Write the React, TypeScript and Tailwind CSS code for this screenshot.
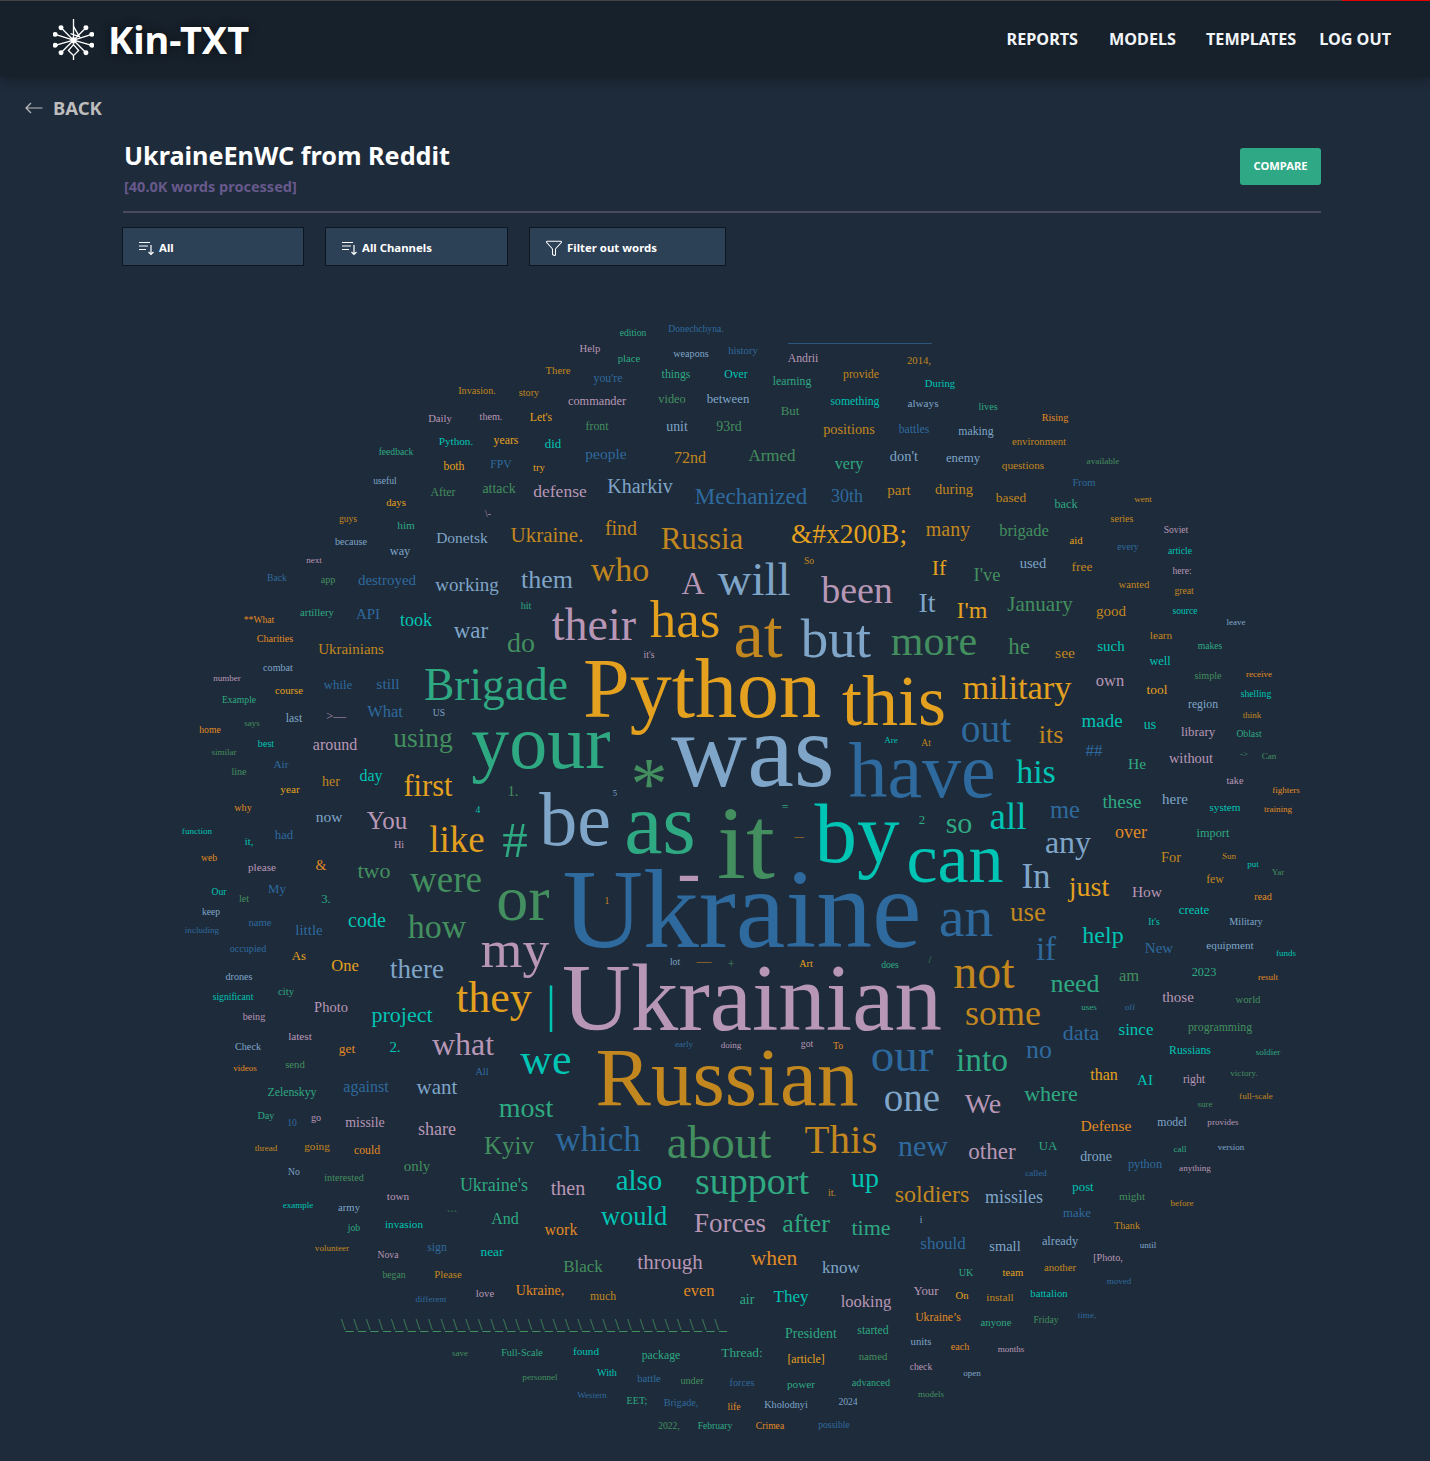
import { Filter } from 'lucide-react';

// word cloud palette
const G = '#e4a11f'; // gold
const A = '#c2871f'; // amber
const O = '#e08a24'; // orange
const B = '#2e6a9e'; // blue
const S = '#7fa5c8'; // sky
const M = '#b897b6'; // mauve
const N = '#438f5f'; // green
const T = '#2ea982'; // teal
const C = '#00c4b4'; // cyan

// [text, center x, center y, font size, colour]
type Word = [string, number, number, number, string];

const words: Word[] = [
  ['edition', 633, 333, 9, T], ['Donechchyna.', 696, 329, 9, B], ['________________________', 860, 339, 11.2, B],
  ['Help', 590, 349, 10, M], ['place', 629, 359, 10, T], ['weapons', 691, 354, 9.5, S], ['history', 743, 351, 10, B],
  ['Andrii', 803, 359, 11, M], ['2014,', 919, 361, 10, A], ['There', 558, 371, 10, A], ["you're", 608, 379, 11, B],
  ['things', 676, 375, 11, T], ['Over', 736, 375, 11, C], ['learning', 792, 382, 11, T], ['provide', 861, 375, 11, A],
  ['During', 940, 384, 10, C], ['Invasion.', 477, 391, 9.5, A], ['story', 529, 393, 9.5, A], ['commander', 597, 402, 11.5, M],
  ['video', 672, 400, 11.5, N], ['between', 728, 399, 12, S], ['something', 855, 402, 11, C], ['always', 923, 404, 10.5, S],
  ['lives', 988, 407, 9.5, T], ['But', 790, 411, 12, N], ['Daily', 440, 419, 10, M], ['them.', 491, 417, 9.5, M],
  ["Let's", 541, 418, 11, G], ['Rising', 1055, 418, 9.5, O], ['front', 597, 427, 11, N], ['unit', 677, 427, 13, S],
  ['93rd', 729, 427, 13, N], ['positions', 849, 430, 14.3, A], ['battles', 914, 430, 11, B], ['making', 976, 432, 11, S],
  ['environment', 1039, 442, 10, A], ['Python.', 456, 442, 10.5, C], ['years', 506, 441, 11, G], ['did', 553, 444, 12, C],
  ['feedback', 396, 452, 9, T], ['people', 606, 454, 15.5, B], ['72nd', 690, 458, 16, A], ['Armed', 772, 456, 17, N],
  ['very', 849, 464, 16, T], ["don't", 904, 457, 13.5, S], ['enemy', 963, 458, 12, S], ['questions', 1023, 466, 10.5, A],
  ['available', 1103, 461, 8.5, N], ['both', 454, 467, 11, G], ['FPV', 501, 465, 11, B], ['try', 539, 468, 10, G],
  ['useful', 385, 481, 9, S], ['From', 1084, 483, 10, B], ['After', 443, 493, 11, N], ['attack', 499, 489, 13, N],
  ['defense', 560, 492, 17.5, M], ['Kharkiv', 640, 487, 20, S], ['Mechanized', 751, 497, 23, B], ['30th', 847, 497, 18, B],
  ['part', 899, 490, 15, A], ['during', 954, 490, 14.5, A], ['based', 1011, 498, 12.5, A], ['went', 1143, 499, 8.5, A],
  ['days', 396, 503, 10, G], ['back', 1066, 505, 11.5, T], ['guys', 348, 519, 9, A], ['\\-', 488, 514, 9, M],
  ['series', 1122, 519, 9.5, A], ['him', 406, 526, 10.5, T], ['Soviet', 1176, 530, 9, M], ['brigade', 1024, 531, 16.5, N],
  ['find', 621, 529, 20, A], ['Ukraine.', 547, 536, 21, A], ['&#x200B;', 849, 535, 27.5, G], ['many', 948, 530, 20, A],
  ['aid', 1076, 541, 10, G], ['because', 351, 542, 9.5, S], ['Donetsk', 462, 538, 15.5, S], ['Russia', 702, 540, 31, A],
  ['every', 1128, 547, 9, B], ['article', 1180, 551, 9, C], ['way', 400, 552, 11.5, S], ['next', 314, 560, 8.5, M],
  ['So', 809, 561, 9, A], ['used', 1033, 564, 14.5, S], ['free', 1082, 567, 12.5, A], ['who', 620, 571, 34, A],
  ["I've", 987, 575, 18.5, N], ['If', 939, 568, 22, G], ['here:', 1182, 571, 9, M], ['them', 547, 580, 26, S],
  ['working', 467, 585, 19, S], ['A', 693, 584, 32, M], ['will', 754, 581, 47, S], ['been', 857, 592, 38, M],
  ['destroyed', 387, 581, 14, B], ['app', 328, 580, 9.5, N], ['Back', 277, 578, 9, B], ['wanted', 1134, 585, 10, A],
  ['great', 1184, 591, 9, A], ['It', 927, 604, 28, S], ["I'm", 972, 611, 24, G], ['January', 1040, 605, 21, N],
  ['good', 1111, 612, 14, A], ['source', 1185, 611, 9, C], ['has', 685, 621, 53, G], ['their', 594, 626, 46, M],
  ['hit', 526, 606, 9.5, T], ['API', 368, 615, 14, B], ['artillery', 317, 613, 10, T], ['**What', 259, 620, 9, O],
  ['took', 416, 621, 18, C], ['war', 471, 631, 23, S], ['leave', 1236, 622, 8.5, S], ['Charities', 275, 639, 9.5, O],
  ['do', 521, 644, 28, N], ['at', 758, 637, 68, A], ['but', 836, 640, 55, S], ['more', 934, 642, 42, N],
  ['he', 1019, 647, 23, N], ['see', 1065, 653, 15.5, A], ['such', 1111, 646, 15, C], ['learn', 1161, 636, 10.5, A],
  ['makes', 1210, 646, 9, T], ['Ukrainians', 351, 650, 14, A], ["it's", 649, 655, 9, M], ['well', 1160, 662, 11.5, C],
  ['combat', 278, 668, 9.5, S], ['number', 227, 678, 8.5, M], ['simple', 1208, 676, 9.5, N], ['receive', 1259, 674, 8.5, O],
  ['own', 1110, 681, 16.5, M], ['tool', 1157, 690, 12.5, G], ['military', 1017, 689, 34.5, G], ['Brigade', 496, 686, 45.5, T],
  ['Python', 702, 692, 84, G], ['this', 894, 703, 72, G], ['while', 338, 685, 12, B], ['still', 388, 684, 15.5, B],
  ['course', 289, 691, 10, G], ['shelling', 1256, 694, 9, C], ['region', 1203, 705, 11, S], ['Example', 239, 700, 9, T],
  ['last', 294, 719, 11, S], ['>—', 336, 716, 12, M], ['What', 385, 712, 16.5, B], ['US', 439, 713, 9, S],
  ['says', 252, 723, 8.5, N], ['think', 1252, 715, 8.5, A], ['made', 1102, 721, 19, C], ['us', 1150, 725, 13, C],
  ['out', 986, 730, 39.5, B], ['its', 1051, 735, 26, A], ['library', 1198, 732, 12, M], ['home', 210, 730, 9, O],
  ['Oblast', 1249, 734, 9, T], ['Are', 891, 740, 8.5, C], ['At', 926, 743, 9, A], ['best', 266, 744, 9.5, C],
  ['around', 335, 745, 16, M], ['using', 423, 739, 27.5, N], ['your', 541, 745, 76, T], ['was', 753, 754, 105, S],
  ['have', 922, 774, 78, B], ['##', 1094, 751, 17, B], ['similar', 224, 752, 8.5, N], ['->', 1244, 754, 8.5, N],
  ['Can', 1269, 756, 8.5, N], ['without', 1191, 759, 13.5, M], ['He', 1137, 764, 15.5, T], ['line', 239, 772, 9.5, N],
  ['Air', 281, 765, 10.5, B], ['day', 371, 776, 16, C], ['her', 331, 782, 13, A], ['first', 428, 787, 30.5, G],
  ['*', 649, 787, 74, N], ['his', 1036, 773, 34, C], ['take', 1235, 781, 9.5, M], ['year', 290, 790, 10.5, G],
  ['1.', 513, 792, 14, N], ['fighters', 1286, 790, 8.5, O], ['5', 615, 794, 8, S], ['these', 1122, 802, 19, T],
  ['here', 1175, 800, 14, S], ['why', 243, 808, 9.5, O], ['system', 1225, 808, 10.5, C], ['training', 1278, 809, 8.5, O],
  ['4', 478, 810, 9, C], ['be', 575, 822, 76, S], ['as', 660, 827, 86, T], ['it', 746, 847, 104, N],
  ['by', 857, 836, 85, C], ['=', 785, 808, 11, T], ['me', 1065, 811, 24.5, B], ['2', 922, 820, 12, T],
  ['so', 959, 824, 30, T], ['all', 1008, 818, 37, C], ['now', 329, 817, 15.5, S], ['You', 387, 821, 25, M],
  ['like', 457, 841, 37, G], ['#', 515, 842, 51, T], ['—', 799, 837, 9, A],
  ['import', 1213, 834, 11.5, T], ['over', 1131, 833, 18, O], ['any', 1068, 843, 32, S], ['function', 197, 831, 8.5, C],
  ['had', 284, 835, 12, B], ['it,', 249, 842, 10, C], ['Hi', 399, 845, 9.5, M], ['can', 955, 861, 70, C],
  ['For', 1171, 858, 13.5, A], ['Sun', 1229, 856, 8.5, A], ['web', 209, 858, 9, O], ['put', 1253, 864, 8.5, C],
  ['please', 262, 868, 10.5, M], ['&', 321, 866, 13, O], ['two', 374, 871, 22, N], ['Yar', 1278, 872, 8.5, N],
  ['In', 1036, 877, 35, S], ['few', 1215, 880, 11, A], ['were', 446, 881, 37, N], ['just', 1089, 888, 28, G],
  ['How', 1147, 892, 15.5, M], ['Our', 219, 892, 9, C], ['My', 277, 889, 12, B], ['let', 244, 899, 9.5, N],
  ['3.', 326, 899, 12, T], ['read', 1263, 897, 9.5, O], ['or', 523, 901, 64, N], ['Ukraine', 742, 914, 111.5, B],
  ['-', 689, 874, 70, M], ['create', 1194, 910, 12, C], ['keep', 211, 912, 9, S], ['use', 1028, 913, 27, A],
  ['Military', 1246, 922, 9.5, S], ['an', 966, 919, 58, B], ['code', 367, 921, 20, C], ["It's", 1154, 922, 9, C],
  ['name', 260, 923, 10, B], ['how', 437, 928, 34, N], ['little', 309, 931, 14, B], ['including', 202, 930, 8.5, B],
  ['help', 1103, 936, 24, C], ['occupied', 248, 949, 9.5, B], ['New', 1159, 948, 15, B], ['equipment', 1230, 946, 10.5, S],
  ['if', 1046, 950, 33, B], ['my', 515, 951, 53.5, M], ['As', 299, 956, 12, G], ['funds', 1286, 953, 8.5, C],
  ['1', 607, 901, 9, A], ['lot', 675, 962, 9, S], ['—', 704, 962, 14, A], ['+', 731, 965, 11, N],
  ['Art', 806, 964, 9.5, G], ['does', 890, 965, 9, T], ['/', 930, 960, 10, N], ['not', 984, 974, 48, A],
  ['One', 345, 966, 16.5, G], ['there', 417, 970, 27, S], ['am', 1129, 976, 16.5, N], ['2023', 1204, 973, 11.5, T],
  ['result', 1268, 977, 8.5, O], ['drones', 239, 977, 9.5, S], ['need', 1075, 984, 26, T], ['city', 286, 992, 10, T],
  ['they', 494, 999, 44, G], ['|', 551, 1006, 50, C], ['those', 1178, 998, 14, M], ['world', 1248, 1000, 10, N],
  ['significant', 233, 997, 9, C], ['Ukrainian', 752, 1001, 95, M], ['uses', 1089, 1007, 8.5, T], ['off', 1130, 1007, 8.5, B],
  ['some', 1003, 1014, 36, A], ['Photo', 331, 1008, 14.5, M], ['being', 254, 1017, 9.5, M], ['project', 402, 1015, 22, C],
  ['data', 1081, 1033, 22, B], ['since', 1136, 1030, 17, C], ['programming', 1220, 1028, 11, N], ['latest', 300, 1037, 10.5, M],
  ['Check', 248, 1047, 9.5, S], ['get', 347, 1049, 12.5, O], ['2.', 395, 1048, 14, C], ['what', 463, 1045, 32, M],
  ['no', 1039, 1050, 26, B], ['early', 684, 1044, 8.5, B], ['doing', 731, 1045, 8.5, M], ['got', 807, 1044, 9, M],
  ['To', 838, 1046, 9, O], ['Russians', 1190, 1051, 11, C], ['soldier', 1268, 1052, 8.5, T], ['our', 902, 1057, 47, B],
  ['into', 982, 1061, 33.5, T], ['we', 546, 1061, 44, C], ['All', 482, 1072, 10, B], ['videos', 245, 1068, 8.5, O],
  ['send', 295, 1065, 10, N], ['against', 366, 1087, 16, B], ['want', 437, 1088, 21, S], ['Russian', 727, 1080, 83, A],
  ['than', 1104, 1075, 16, G], ['AI', 1145, 1081, 14, C], ['right', 1194, 1080, 11, M], ['victory.', 1244, 1073, 8.5, N],
  ['one', 912, 1099, 39, S], ['We', 983, 1105, 28, M], ['where', 1051, 1094, 22, T], ['full-scale', 1256, 1096, 8.5, A],
  ['Zelenskyy', 292, 1093, 11, T], ['sure', 1205, 1104, 8.5, N], ['most', 526, 1109, 28, T], ['Day', 266, 1116, 9.5, T],
  ['go', 316, 1118, 9.5, M], ['10', 292, 1123, 9, B], ['missile', 365, 1123, 13, M], ['share', 437, 1130, 18, M],
  ['Defense', 1106, 1126, 15.5, O], ['model', 1172, 1123, 11, S], ['provides', 1223, 1122, 8.5, M], ['Kyiv', 509, 1146, 25, N],
  ['which', 598, 1140, 35, B], ['about', 719, 1144, 47, N], ['This', 841, 1141, 41, A], ['new', 923, 1147, 30, B],
  ['thread', 266, 1148, 8.5, A], ['going', 317, 1147, 10.5, A], ['could', 367, 1151, 11, O], ['other', 992, 1152, 23, M],
  ['UA', 1048, 1146, 12, T], ['drone', 1096, 1157, 13, S], ['call', 1180, 1149, 8.5, T], ['version', 1231, 1147, 8.5, S],
  ['only', 417, 1167, 14, N], ['python', 1145, 1165, 11.5, B], ['anything', 1195, 1168, 8.5, M], ['No', 294, 1172, 9, S],
  ['interested', 344, 1178, 9.5, N], ['called', 1036, 1173, 8.5, B], ['also', 639, 1181, 29, C], ['support', 752, 1183, 38, T],
  ['it.', 832, 1193, 9.5, A], ['up', 865, 1179, 28, C], ['post', 1083, 1187, 12, C], ["Ukraine's", 494, 1186, 18, T],
  ['then', 568, 1189, 20, M], ['soldiers', 932, 1195, 24, A], ['missiles', 1014, 1198, 18, S], ['might', 1132, 1197, 10.5, N],
  ['town', 398, 1197, 10.5, M], ['before', 1182, 1203, 8.5, A], ['example', 298, 1205, 8.5, C], ['army', 349, 1208, 10, S],
  ['```', 452, 1215, 10, N], ['make', 1077, 1213, 12, B], ['And', 505, 1219, 16, T], ['would', 634, 1217, 26.5, C],
  ['Forces', 730, 1224, 27, M], ['after', 806, 1224, 26, T], ['time', 871, 1228, 22, T], ['i', 921, 1220, 9, S],
  ['work', 561, 1230, 16, O], ['Thank', 1127, 1226, 9.5, A], ['job', 354, 1228, 9, T], ['invasion', 404, 1225, 10.5, C],
  ['volunteer', 332, 1248, 8.5, A], ['should', 943, 1244, 17, B], ['small', 1005, 1247, 13.5, S], ['already', 1060, 1242, 11.5, S],
  ['Nova', 388, 1255, 9, M], ['sign', 437, 1248, 11, B], ['near', 492, 1252, 12.5, C], ['until', 1148, 1245, 8.5, S],
  ['through', 670, 1263, 21, M], ['when', 774, 1259, 21.5, O], ['[Photo,', 1108, 1258, 9.5, M], ['Black', 583, 1267, 17, N],
  ['know', 841, 1268, 17, S], ['began', 394, 1275, 9, N], ['UK', 966, 1273, 9.5, T], ['team', 1013, 1273, 10, G],
  ['another', 1060, 1268, 10, A], ['Please', 448, 1275, 10, A], ['moved', 1119, 1281, 8.5, B], ['Your', 926, 1291, 12, M],
  ['On', 962, 1296, 10, G], ['install', 1000, 1298, 10.5, A], ['love', 485, 1294, 10, M], ['Ukraine,', 540, 1291, 13, O],
  ['much', 603, 1297, 11, A], ['even', 699, 1291, 16.5, O], ['air', 747, 1300, 13, T], ['They', 791, 1297, 17, C],
  ['looking', 866, 1302, 16.5, M], ['battalion', 1049, 1294, 10, C], ['different', 431, 1299, 8.5, B], ['time,', 1087, 1315, 8.5, B],
  ['Friday', 1046, 1320, 9, N], ['Ukraine’s', 938, 1318, 11, O], ['anyone', 996, 1323, 10, T],
  ['\\_\\_\\_\\_\\_\\_\\_\\_\\_\\_\\_\\_\\_\\_\\_\\_\\_\\_\\_\\_\\_\\_\\_\\_\\_\\_\\_\\_\\_\\_\\_', 534, 1325, 16, N],
  ['President', 811, 1334, 13, T], ['started', 873, 1331, 11, T], ['units', 921, 1342, 10, S], ['each', 960, 1347, 9.5, O],
  ['months', 1011, 1349, 8.5, M], ['Thread:', 742, 1353, 12.5, T], ['[article]', 806, 1360, 11, G], ['named', 873, 1357, 10, N],
  ['package', 661, 1356, 11, T], ['found', 586, 1352, 10.5, C], ['Full-Scale', 522, 1353, 9.5, T], ['save', 460, 1353, 8.5, N],
  ['check', 921, 1367, 9, M], ['open', 972, 1373, 8.5, S], ['personnel', 540, 1377, 8.5, N], ['With', 607, 1373, 9.5, C],
  ['battle', 649, 1379, 10, B], ['under', 692, 1381, 9.5, N], ['forces', 742, 1383, 9.5, B], ['power', 801, 1385, 10.5, T],
  ['advanced', 871, 1383, 9.5, T], ['Western', 592, 1395, 8.5, B], ['models', 931, 1394, 8.5, N], ['EET;', 637, 1401, 9.5, T],
  ['Brigade,', 681, 1403, 9.5, B], ['life', 734, 1407, 9, O], ['Kholodnyi', 786, 1405, 9.5, S], ['2024', 848, 1402, 9, S],
  ['2022,', 669, 1426, 9, N], ['February', 715, 1426, 9, T], ['Crimea', 770, 1426, 9, O], ['possible', 834, 1425, 9, B],
];

// small words come out a bit narrow next to the reference, nudge them up
const fontSize = (size: number) => (size <= 14 ? size * 1.07 : size);

function KinLogo() {
  const dots = [
    [11, 12], [45, 12], [3, 21], [53, 21], [3, 36], [53, 36], [11, 46], [45, 46],
  ];
  return (
    <svg width="41" height="41" viewBox="0 0 56 56" className="shrink-0 text-white" fill="none" stroke="currentColor" strokeWidth="1.8">
      <path d="M28 29V0M28 29V35L21 43L28 50V56M28 35L35 43L28 50" />
      <path d="M28 29L11 12M28 29L45 12M28 29L3 21M28 29L53 21M28 29L3 36M28 29L53 36M28 29L11 46M28 29L45 46M28 10L36 24L24 20" />
      {dots.map(([x, y]) => (
        <circle key={`${x}-${y}`} cx={x} cy={y} r="3.4" fill="currentColor" stroke="none" />
      ))}
      <circle cx="28" cy="29" r="4" fill="currentColor" stroke="none" />
    </svg>
  );
}

function SortIcon() {
  return (
    <svg width="17" height="17" viewBox="0 0 17 17" fill="none" stroke="currentColor" strokeWidth="1.2" className="shrink-0">
      <path d="M1 3.5H12M1 7H10M1 10.5H8M13 6V15.5M10.5 13L13 15.5L15.5 13" />
    </svg>
  );
}

function Dropdown({ label, width, icon }: { label: string; width: string; icon: React.ReactNode }) {
  return (
    <button className={`flex h-[39px] items-center gap-[4px] border border-[#0e1620] bg-[#2c4056] pt-[2px] pl-[15px] text-[11.4px] font-bold text-white ${width}`}>
      {icon}
      {label}
    </button>
  );
}

export default function App() {
  return (
    <div className="min-h-[1461px] bg-[#1e2b3a] font-['Noto_Sans',sans-serif] text-white">
      {/* top bar */}
      <div className="relative flex h-[77px] items-center justify-between border-t border-[#444] bg-[#17212b] pr-[39px] pl-[53px] shadow-[0_4px_10px_rgba(0,0,0,0.25)]">
        <div className="absolute top-[-1px] right-0 h-[1px] w-[88px] bg-[#e00000]" />
        <div className="flex items-center gap-[14px]">
          <KinLogo />
          <span className="text-[38px] leading-none font-bold [text-shadow:0_0_10px_rgba(0,0,0,0.6)]">Kin-TXT</span>
        </div>
        <nav className="flex items-center text-[16.2px] font-bold text-[#f2f5f8]">
          <a className="mr-[31px]">REPORTS</a>
          <a className="mr-[30px]">MODELS</a>
          <a className="mr-[23px]">TEMPLATES</a>
          <a>LOG OUT</a>
        </nav>
      </div>

      {/* back link */}
      <div className="flex h-[60px] items-center gap-[10px] pt-[2px] pl-[25px] text-[#bdbdbd]">
        <svg width="18" height="12" viewBox="0 0 18 12" fill="none" stroke="currentColor" strokeWidth="1.2" className="shrink-0">
          <path d="M17.5 6H1M6 1L1 6L6 11" />
        </svg>
        <span className="text-[18.5px] font-bold">BACK</span>
      </div>

      <div className="ml-[123px] w-[1198px]">
        <div className="flex h-[76px] items-start justify-between border-b-2 border-[#4a4a5e]">
          <div className="pl-[1px]">
            <h1 className="text-[25.2px] leading-[36px] font-bold">UkraineEnWC from Reddit</h1>
            <p className="mt-[1px] text-[14.5px] leading-[24px] font-bold text-[#67598c]">[40.0K words processed]</p>
          </div>
          <button className="mt-[11px] h-[37px] w-[81px] rounded-[3px] bg-[#2fa985] text-[11.2px] font-bold">COMPARE</button>
        </div>

        <div className="mt-[14px] flex -translate-x-[1px] gap-[21px]">
          <Dropdown label="All" width="w-[182px]" icon={<SortIcon />} />
          <Dropdown label="All Channels" width="w-[183px]" icon={<SortIcon />} />
          <Dropdown label="Filter out words" width="w-[197px]" icon={<Filter size={18} strokeWidth={1.4} />} />
        </div>
      </div>

      {/* word cloud */}
      <svg viewBox="0 300 1430 1161" className="mt-[34px] block h-[1161px] w-[1430px] font-['Liberation_Serif',serif]">
        {words.map(([text, x, y, size, color], i) => (
          <text key={i} x={x} y={y + size * 0.3} fontSize={fontSize(size)} fill={color} textAnchor="middle">
            {text}
          </text>
        ))}
      </svg>
    </div>
  );
}
